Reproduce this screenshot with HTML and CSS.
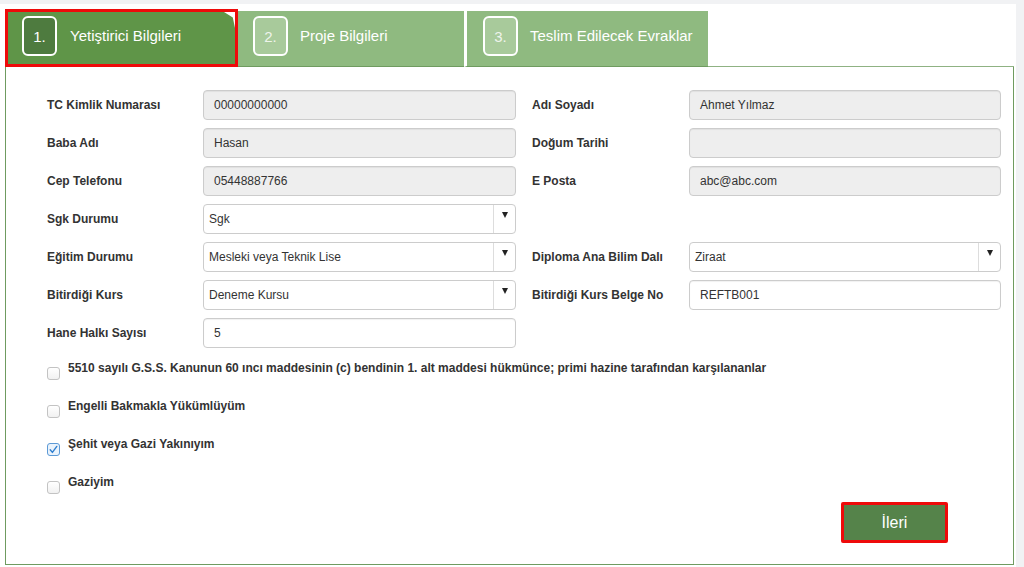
FILE: index.html
```html
<!DOCTYPE html>
<html lang="tr">
<head>
<meta charset="utf-8">
<title>Yetiştirici Bilgileri</title>
<link rel="stylesheet" href="styles.css">
</head>
<body>
<div class="page">
  <div class="tabs">
    <div class="tab tab-active"><span class="num">1.</span><span class="tab-label">Yetiştirici Bilgileri</span></div>
    <div class="tab tab-two"><span class="num">2.</span><span class="tab-label">Proje Bilgileri</span></div>
    <div class="tab tab-three"><span class="num">3.</span><span class="tab-label">Teslim Edilecek Evraklar</span></div>
    <div class="tab-fill"></div>
  </div>
  <div class="panel">
    <div class="form-grid">
      <div class="lbl">TC Kimlik Numarası</div>
      <div class="field ro">00000000000</div>
      <div class="lbl lbl-right">Adı Soyadı</div>
      <div class="field ro">Ahmet Yılmaz</div>

      <div class="lbl">Baba Adı</div>
      <div class="field ro">Hasan</div>
      <div class="lbl lbl-right">Doğum Tarihi</div>
      <div class="field ro"></div>

      <div class="lbl">Cep Telefonu</div>
      <div class="field ro">05448887766</div>
      <div class="lbl lbl-right">E Posta</div>
      <div class="field ro">abc@abc.com</div>

      <div class="lbl">Sgk Durumu</div>
      <div class="select"><span class="sel-text">Sgk</span><span class="sel-btn"><span class="caret"></span></span></div>
      <div class="empty"></div>
      <div class="empty"></div>

      <div class="lbl">Eğitim Durumu</div>
      <div class="select"><span class="sel-text">Mesleki veya Teknik Lise</span><span class="sel-btn"><span class="caret"></span></span></div>
      <div class="lbl lbl-right">Diploma Ana Bilim Dalı</div>
      <div class="select"><span class="sel-text">Ziraat</span><span class="sel-btn"><span class="caret"></span></span></div>

      <div class="lbl">Bitirdiği Kurs</div>
      <div class="select"><span class="sel-text">Deneme Kursu</span><span class="sel-btn"><span class="caret"></span></span></div>
      <div class="lbl lbl-right">Bitirdiği Kurs Belge No</div>
      <div class="field">REFTB001</div>

      <div class="lbl">Hane Halkı Sayısı</div>
      <div class="field">5</div>
      <div class="empty"></div>
      <div class="empty"></div>
    </div>

    <div class="checks">
      <div class="check-row"><span class="cb"></span><span class="cb-label">5510 sayılı G.S.S. Kanunun 60 ıncı maddesinin (c) bendinin 1. alt maddesi hükmünce; primi hazine tarafından karşılananlar</span></div>
      <div class="check-row"><span class="cb"></span><span class="cb-label">Engelli Bakmakla Yükümlüyüm</span></div>
      <div class="check-row"><span class="cb cb-on"><svg viewBox="0 0 13 13" width="13" height="13"><path d="M3.2 6.8 L5.4 9.4 L9.8 3.4" fill="none" stroke="#2f7fcf" stroke-width="1.4" stroke-linecap="round" stroke-linejoin="round"/></svg></span><span class="cb-label">Şehit veya Gazi Yakınıyım</span></div>
      <div class="check-row"><span class="cb"></span><span class="cb-label">Gaziyim</span></div>
    </div>

    <div class="actions">
      <button class="btn-next" type="button">İleri</button>
    </div>
  </div>
</div>
</body>
</html>
```

FILE: styles.css
```css
html, body {
  margin: 0;
  padding: 0;
}
body {
  background: #f1f2f4;
  font-family: "Liberation Sans", Arial, sans-serif;
  color: #333;
  width: 1024px;
  height: 567px;
  overflow: hidden;
}
.page {
  background: #ffffff;
  width: 1016px;
  height: 563px;
  margin-top: 4px;
  padding-top: 5px;
  box-sizing: border-box;
}

/* Tabs */
.tabs {
  display: flex;
  align-items: flex-end;
  margin-left: 5px;
  width: 1009px;
  height: 58px;
}
.tab {
  display: flex;
  align-items: flex-start;
  box-sizing: border-box;
  color: #ffffff;
  font-size: 15px;
}
.tab-active {
  position: relative;
  width: 233px;
  height: 58px;
  border: 3px solid #ee0a0a;
  background: #5f9548;
  padding: 4px 0 0 14px;
}
.tab-active::after {
  content: "";
  position: absolute;
  top: 0;
  right: 0;
  width: 11px;
  height: 16px;
  background: #ffffff;
  clip-path: polygon(0 0, 100% 0, 100% 100%, 80% 35%);
}
.tab-two {
  width: 226px;
  height: 56px;
  background: #8fba80;
  border-bottom: 1px solid #6f9b60;
  padding: 5px 0 0 15px;
}
.tab-three {
  width: 244px;
  height: 56px;
  background: #8fba80;
  border-left: 3px solid #ffffff;
  border-bottom: 1px solid #6f9b60;
  padding: 5px 0 0 16px;
}
.tab-fill {
  flex: 1;
  height: 1px;
  background: #8fb283;
}
.num {
  display: flex;
  align-items: center;
  justify-content: center;
  width: 35px;
  height: 40px;
  box-sizing: border-box;
  border: 2px solid #ffffff;
  border-radius: 6px;
  background: #4e7b3f;
  color: #ffffff;
  font-size: 15px;
  flex: none;
}
.tab-two .num, .tab-three .num {
  background: #a8ca9b;
  color: #eef4eb;
}
.tab-label {
  margin-left: 13px;
  line-height: 40px;
  white-space: nowrap;
}
.tab-two .tab-label, .tab-three .tab-label {
  margin-left: 12px;
}

/* Panel */
.panel {
  width: 1009px;
  margin-left: 5px;
  box-sizing: border-box;
  border: 1px solid #6f9b60;
  border-top: none;
  padding: 23px 12px 21px 41px;
}
.form-grid {
  display: grid;
  grid-template-columns: 156px 313px 173px 312px;
  grid-auto-rows: 30px;
  row-gap: 8px;
}
.lbl {
  font-size: 12px;
  font-weight: bold;
  color: #333;
  align-self: center;
  white-space: nowrap;
}
.lbl-right {
  padding-left: 16px;
}
.field {
  box-sizing: border-box;
  height: 30px;
  border: 1px solid #cccccc;
  border-radius: 4px;
  background: #ffffff;
  box-shadow: inset 0 1px 1px rgba(0,0,0,0.06);
  font-size: 12px;
  color: #333;
  line-height: 28px;
  padding: 0 10px;
}
.field.ro {
  background: #eeeeee;
}
.select {
  display: flex;
  box-sizing: border-box;
  height: 30px;
  border: 1px solid #cccccc;
  border-radius: 4px;
  background: #ffffff;
  font-size: 12px;
  color: #333;
}
.sel-text {
  flex: 1;
  line-height: 29px;
  padding-left: 5px;
}
.sel-btn {
  width: 22px;
  border-left: 1px solid #dddddd;
  display: flex;
  align-items: center;
  justify-content: center;
  padding-bottom: 8px;
  box-sizing: border-box;
}
.caret {
  width: 0;
  height: 0;
  border-left: 3.5px solid transparent;
  border-right: 3.5px solid transparent;
  border-top: 6px solid #222;
}

/* Checkboxes */
.checks {
  margin-top: 1px;
}
.check-row {
  display: flex;
  align-items: flex-start;
  height: 38px;
  box-sizing: border-box;
  padding-top: 11px;
}
.cb {
  width: 13px;
  height: 13px;
  box-sizing: border-box;
  margin-top: 7px;
  margin-right: 8px;
  border: 1px solid #c3c3c3;
  border-radius: 3px;
  background: linear-gradient(#ffffff, #f1f1f1);
  flex: none;
  display: flex;
}
.cb svg {
  margin: -1px;
}
.cb-on {
  border-color: #5c9ad6;
  background: #eaf3fc;
}
.cb-label {
  font-size: 12px;
  font-weight: bold;
  line-height: 16px;
  color: #333;
  white-space: nowrap;
}

/* Button */
.actions {
  display: flex;
  justify-content: flex-end;
  margin-top: 1px;
  padding-right: 53px;
}
.btn-next {
  width: 107px;
  height: 41px;
  box-sizing: border-box;
  border: 3px solid #ee0a0a;
  border-radius: 2px;
  background: #55834a;
  color: #ffffff;
  font-family: "Liberation Sans", Arial, sans-serif;
  font-size: 16px;
  padding: 0;
}
```
